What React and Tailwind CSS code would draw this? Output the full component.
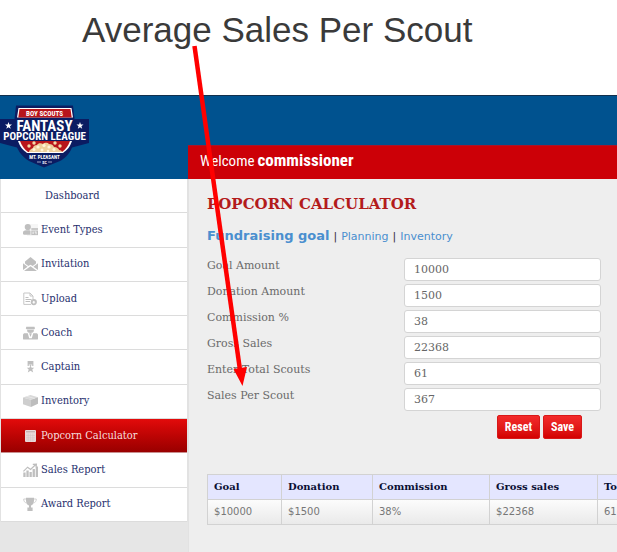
import React, { useState } from "react";

const menu = [
  { label: "Dashboard" },
  { label: "Event Types", icon: "events" },
  { label: "Invitation", icon: "invitation" },
  { label: "Upload", icon: "upload" },
  { label: "Coach", icon: "coach" },
  { label: "Captain", icon: "captain" },
  { label: "Inventory", icon: "inventory" },
  { label: "Popcorn Calculator", icon: "calculator", active: true },
  { label: "Sales Report", icon: "sales" },
  { label: "Award Report", icon: "award" },
];

const fields = [
  { name: "goal", label: "Goal Amount" },
  { name: "donation", label: "Donation Amount" },
  { name: "commission", label: "Commission %" },
  { name: "gross", label: "Gross Sales" },
  { name: "scouts", label: "Enter Total Scouts" },
  { name: "perScout", label: "Sales Per Scout" },
];

const defaults = {
  goal: "10000",
  donation: "1500",
  commission: "38",
  gross: "22368",
  scouts: "61",
  perScout: "367",
};

const icons = {
  events: (
    <>
      <rect x="4" y="1" width="11" height="12" fill="#f6f6f6" />
      <circle cx="4.8" cy="4" r="3.1" />
      <path d="M0 11V9.5C0 8 1.2 7.4 3 7.2h3.5l1 .8v3.7H.8z" />
      <path d="M8.3 5.2H15v1.6H8.3z" />
      <path d="M8.3 7.4H15V12H8.3zM9.6 8.5v2.6h1V8.5zm2 0v1h1v1.7h.9V8.5z" fillRule="evenodd" />
    </>
  ),
  invitation: (
    <>
      <path d="M7.5 0 13 4.6v1.8L9.7 9 7.5 7.7 5.3 9 2 6.4V4.6z" />
      <path d="M0 6.3 4.6 9.7 0 13zM15 6.3 10.4 9.7 15 13zM7.5 9.2 14 14H1z" />
    </>
  ),
  upload: (
    <>
      <path
        d="M8 12.4H.8V1H7l3 3v3M7 1v3h3"
        fill="none"
        stroke="#c6c6c6"
        strokeWidth="1"
      />
      <path d="M2.5 5h3v1h-3zM2.5 7h6v1h-6zM2.5 9h4.5v1H2.5z" />
      <path
        d="M10.8 7a3.1 3.1 0 1 0 0 6.2 3.1 3.1 0 0 0 0-6.2m0 1.8 1.7 1.6h-1v1.2h-1.4v-1.2h-1z"
        fillRule="evenodd"
      />
    </>
  ),
  coach: (
    <>
      <path d="M3.3.7h8.2l.5 1.8-1 1H4l-1.2-1zM4.2 4h6.6v1c0 1.3-1.4 2-3.3 2s-3.3-.7-3.3-2z" />
      <path
        d="M0 9c0-1.2.8-1.8 2-1.8h11c1.2 0 2 .6 2 1.8v3.4c0 .9-.4 1.2-1.2 1.2H1.2c-.8 0-1.2-.3-1.2-1.2zm4.8-1.8 1.4 5h2.6l1.4-5H8.9L7.5 11 6.1 7.2z"
        fillRule="evenodd"
      />
    </>
  ),
  captain: (
    <>
      <path d="M4.6 1h5.8v5H9.2V4.500H5.8V6H4.600z" />
      <path d="M6.700 4.500h1.600V6H6.700zM7.5 5.500l1.100 2.300h2.600L9.300 9.500l.9 3-2.700-1.800-2.700 1.800.9-3-1.900-1.700h2.600z" />
    </>
  ),
  inventory: (
    <>
      <path d="M0 3.5 7.5 1 15 3.3 8 5.7z" fill="#d9d9d9" />
      <path d="M0 3.5 8 5.7V13L0 10.2z" fill="#cecece" />
      <path d="M8 5.7 15 3.3v6.5L8 13z" fill="#bdbdbd" />
      <path d="m3 2.5 8 2.2 1.2-.4-8-2.2z" fill="#e9e9e9" />
    </>
  ),
  calculator: (
    <>
      <rect x="2" y="1" width="11" height="12" rx="1" fill="#e9d9d9" />
      <path d="M3 2h9v1.4H3z" fill="#c8b4b4" />
      <path
        d="M3 6.5h9M3 8.8h9M3 11h9M5.2 4.5v8M7.5 4.5v8M9.8 4.5v8"
        stroke="#d2c4c4"
        strokeWidth=".5"
      />
    </>
  ),
  sales: (
    <>
      <path d="M.3 9.5h2.3V14H.3zM3.4 7.5h2.3V14H3.4zM6.5 9h2.3v5H6.5zM9.6 6h2.3v8H9.6zM12.7 3.5H15V14h-2.3z" />
      <path
        d="m.4 8.4 4.2-4.2 3 2.2L12.5 1.8M9.8 1.3l3.6-.2-.3 3.3"
        fill="none"
        stroke="#bdbdbd"
        strokeWidth="1.2"
      />
    </>
  ),
  award: (
    <>
      <path d="M3 .8h8v2.6c0 3-1.6 4.4-3 5v2h1.6V14H4.4v-3.6H6v-2c-1.4-.6-3-2-3-5z" />
      <path
        d="M3 2H.7c0 2.4 1 3.6 3 4M11 2h2.3c0 2.4-1 3.6-3 4"
        fill="none"
        stroke="#cdcdcd"
        strokeWidth=".9"
      />
    </>
  ),
};

const MenuIcon = ({ name }) => (
  <svg className="w-[15px] h-[14px]" viewBox="0 0 15 14" fill="#bfbfbf" aria-hidden="true">
    {icons[name]}
  </svg>
);

const Logo = () => (
  <svg className="w-[90px] h-[64px]" viewBox="0 0 90 64" role="img" aria-label="Fantasy Popcorn League">
    <path
      d="M16 .5h57L74.5 14H89v24l-17 4.5C69 50 64 54 60 56l-16 6.5L29 56c-5-3-9-7-12-13.5L0 38V14h14.5z"
      fill="#0b1c62"
    />
    <path d="M18.5 3h53L73 12.5H17z" fill="#fff" />
    <path d="M19.5 4h51l1.2 8.5H18.3z" fill="#b8151b" />
    <path d="M18 36h54c-2 6-5 9-9 12H27c-4-3-7-6-9-12z" fill="#fff" />
    <path d="M20 36h50c-2 5-4 8-8 11H28c-4-3-6-6-8-11z" fill="#b8151b" />
    <path
      d="M29 47c0-2 2-3 4-4 0-2 2-3 4-3 1-2 4-2 6-1 2-2 5-1 6 0 3 0 4 1 5 3 3 0 5 2 5 3 2 0 3 1 3 2z"
      fill="#edcf9c"
    />
    <g fill="#fff3d6">
      <circle cx="34" cy="44.5" r="1.5" />
      <circle cx="38" cy="42" r="1.6" />
      <circle cx="44" cy="40.500" r="1.6" />
      <circle cx="49" cy="42" r="1.6" />
      <circle cx="54" cy="44.500" r="1.5" />
      <circle cx="42" cy="45" r="1.5" />
      <circle cx="48" cy="46" r="1.3" />
    </g>
    <g fill="#f3d9a8">
      <circle cx="29" cy="41" r="1.700" />
      <circle cx="34" cy="38" r="1.700" />
      <circle cx="55" cy="38" r="1.700" />
      <circle cx="60" cy="41" r="1.700" />
    </g>
    <path
      d="m8.500 17 .9 2.600H12l-2.100 1.600.8 2.600-2.200-1.600-2.200 1.600.8-2.600L5 19.600h2.600zM80 17l.9 2.600h2.600l-2.100 1.600.8 2.600-2.200-1.600-2.200 1.600.8-2.600-2.100-1.600h2.600z"
      fill="#fff"
    />
    <g fill="#fff" textAnchor="middle" fontWeight="700" fontFamily="'Roboto Condensed', 'Roboto', sans-serif">
      <text x="44.5" y="10.5" fontSize="7">BOY SCOUTS</text>
      <text x="44.5" y="26" fontSize="15">FANTASY</text>
      <text x="44.5" y="35" fontSize="11">POPCORN LEAGUE</text>
      <text x="44.5" y="53.5" fontSize="5">MT. PLEASANT</text>
      <text x="44.5" y="58.5" fontSize="4">SC</text>
    </g>
    <path d="M37 57h4M48 57h4" stroke="#fff" strokeWidth=".6" />
  </svg>
);

const Sidebar = () => (
  <nav className="w-[188px] shrink-0 bg-[#e6e6e6] font-['DejaVu_Serif_Condensed','DejaVu_Serif',serif]">
    <ul className="grid auto-rows-fr h-[343px] border-x border-[#e2e2e2]">
      {menu.map((item) => (
        <li
          key={item.label}
          className={
            item.active
              ? "border-b border-[#c98f8f] bg-linear-to-b from-[#e30b0b] to-[#990000]"
              : "border-b border-[#dcdcdc] bg-white"
          }
        >
          <a
            href="#"
            className={
              item.active
                ? "flex h-full items-center gap-[3px] pl-[22px] text-[#f6dede]"
                : item.icon
                ? "flex h-full items-center gap-[3px] pl-[22px] text-[#1f2f6e]"
                : "flex h-full items-center pl-11 text-[#1f2f6e]"
            }
          >
            {item.icon && <MenuIcon name={item.icon} />}
            {item.label}
          </a>
        </li>
      ))}
    </ul>
  </nav>
);

const App = () => {
  const [values, setValues] = useState(defaults);

  const handleChange = (e) => {
    setValues((prev) => ({ ...prev, [e.target.name]: e.target.value }));
  };

  const handleSubmit = (e) => {
    e.preventDefault();
  };

  return (
    <div className="relative flex min-h-screen flex-col overflow-hidden bg-white font-['DejaVu_Serif',serif] text-[11px] leading-4">
      <h1 className="h-[95px] pl-[82px] pt-2 font-['Liberation_Sans',sans-serif] text-[35px] leading-[44px] text-[#3a3a3a] whitespace-nowrap">
        Average Sales Per Scout
      </h1>

      <header className="flex h-[84px] border-t border-[#12304d] bg-[#00528f]">
        <div className="w-[188px] shrink-0 pt-[9px]">
          <Logo />
        </div>
        <div className="flex flex-1 items-end">
          <p className="flex h-[34px] w-full items-baseline gap-[3px] border-t border-[#a8142a] bg-[#cc0007] pl-3 pt-[6px] font-['Roboto_Condensed','Roboto',sans-serif] text-[15px] text-white">
            Welcome <strong className="text-[17px] font-bold">commissioner</strong>
          </p>
        </div>
      </header>

      <div className="flex flex-1">
        <Sidebar />

        <main className="min-w-0 flex-1 border-l border-[#e2e2e2] bg-[#eeeeee] pl-[18px] pt-4">
          <h2 className="text-[15px] leading-[18px] font-bold text-[#b31b1b]">
            POPCORN CALCULATOR
          </h2>

          <div className="mt-[14px] flex items-baseline gap-1 font-['DejaVu_Sans',sans-serif] text-[11px] leading-[18px] text-[#4a8fcf]">
            <a href="#" className="text-[13px] font-bold">Fundraising goal</a>
            <span className="text-[#333333]">|</span>
            <a href="#">Planning</a>
            <span className="text-[#333333]">|</span>
            <a href="#">Inventory</a>
          </div>

          <form onSubmit={handleSubmit} className="pr-4 pt-3 text-[#6a6a6a]">
            <div className="flex flex-col gap-[3px]">
              {fields.map((field) => (
                <div key={field.name} className="grid grid-cols-2">
                  <label htmlFor={field.name}>{field.label}</label>
                  <input
                    id={field.name}
                    name={field.name}
                    type="text"
                    value={values[field.name]}
                    onChange={handleChange}
                    className="h-[23px] w-full rounded-[3px] border border-[#d4d4d4] bg-white px-[9px] text-[#666666]"
                  />
                </div>
              ))}
            </div>

            <div className="mt-1 flex justify-end gap-[3px] pr-[19px] font-['Roboto_Condensed','Roboto',sans-serif] text-[12px] font-bold text-white">
              <button
                type="button"
                onClick={() => setValues(defaults)}
                className="h-6 w-[43px] rounded-[2px] border border-[#d81818] bg-linear-to-b from-[#f32a2a] to-[#d30000]"
              >
                Reset
              </button>
              <button
                type="submit"
                className="h-6 w-[39px] rounded-[2px] border border-[#d81818] bg-linear-to-b from-[#f32a2a] to-[#d30000]"
              >
                Save
              </button>
            </div>
          </form>

          <div className="mt-[35px] overflow-hidden">
            <table className="w-[520px] table-fixed border-collapse text-left">
              <thead>
                <tr className="h-[25px] bg-[#e4e6ff] text-[10px] text-[#0a0f33]">
                  <th className="w-[74px] border border-[#d2d2d2] px-[6px]">Goal</th>
                  <th className="w-[91px] border border-[#d2d2d2] px-[6px]">Donation</th>
                  <th className="w-[117px] border border-[#d2d2d2] px-[6px]">Commission</th>
                  <th className="w-[108px] border border-[#d2d2d2] px-[6px]">Gross sales</th>
                  <th className="border border-[#d2d2d2] px-[6px]">Total Scouts</th>
                </tr>
              </thead>
              <tbody>
                <tr className="h-[25px] bg-linear-to-b from-[#fcfcfc] to-[#e9e9e9] font-['DejaVu_Sans',sans-serif] text-[10px] text-[#777777]">
                  <td className="border border-[#d2d2d2] px-[6px]">${values.goal}</td>
                  <td className="border border-[#d2d2d2] px-[6px]">${values.donation}</td>
                  <td className="border border-[#d2d2d2] px-[6px]">{values.commission}%</td>
                  <td className="border border-[#d2d2d2] px-[6px]">${values.gross}</td>
                  <td className="border border-[#d2d2d2] px-[6px]">{values.scouts}</td>
                </tr>
              </tbody>
            </table>
          </div>
        </main>
      </div>

      {/* arrow from the title down to the Sales Per Scout row */}
      <svg
        className="pointer-events-none absolute left-[190px] top-[44px] h-[344px] w-[60px]"
        viewBox="0 0 60 344"
        aria-hidden="true"
      >
        <path d="M4.5 2 50 326" stroke="#ff0000" strokeWidth="4.5" />
        <path d="M43.5 325 57 323 52.500 342z" fill="#ff0000" />
      </svg>
    </div>
  );
};

export default App;
